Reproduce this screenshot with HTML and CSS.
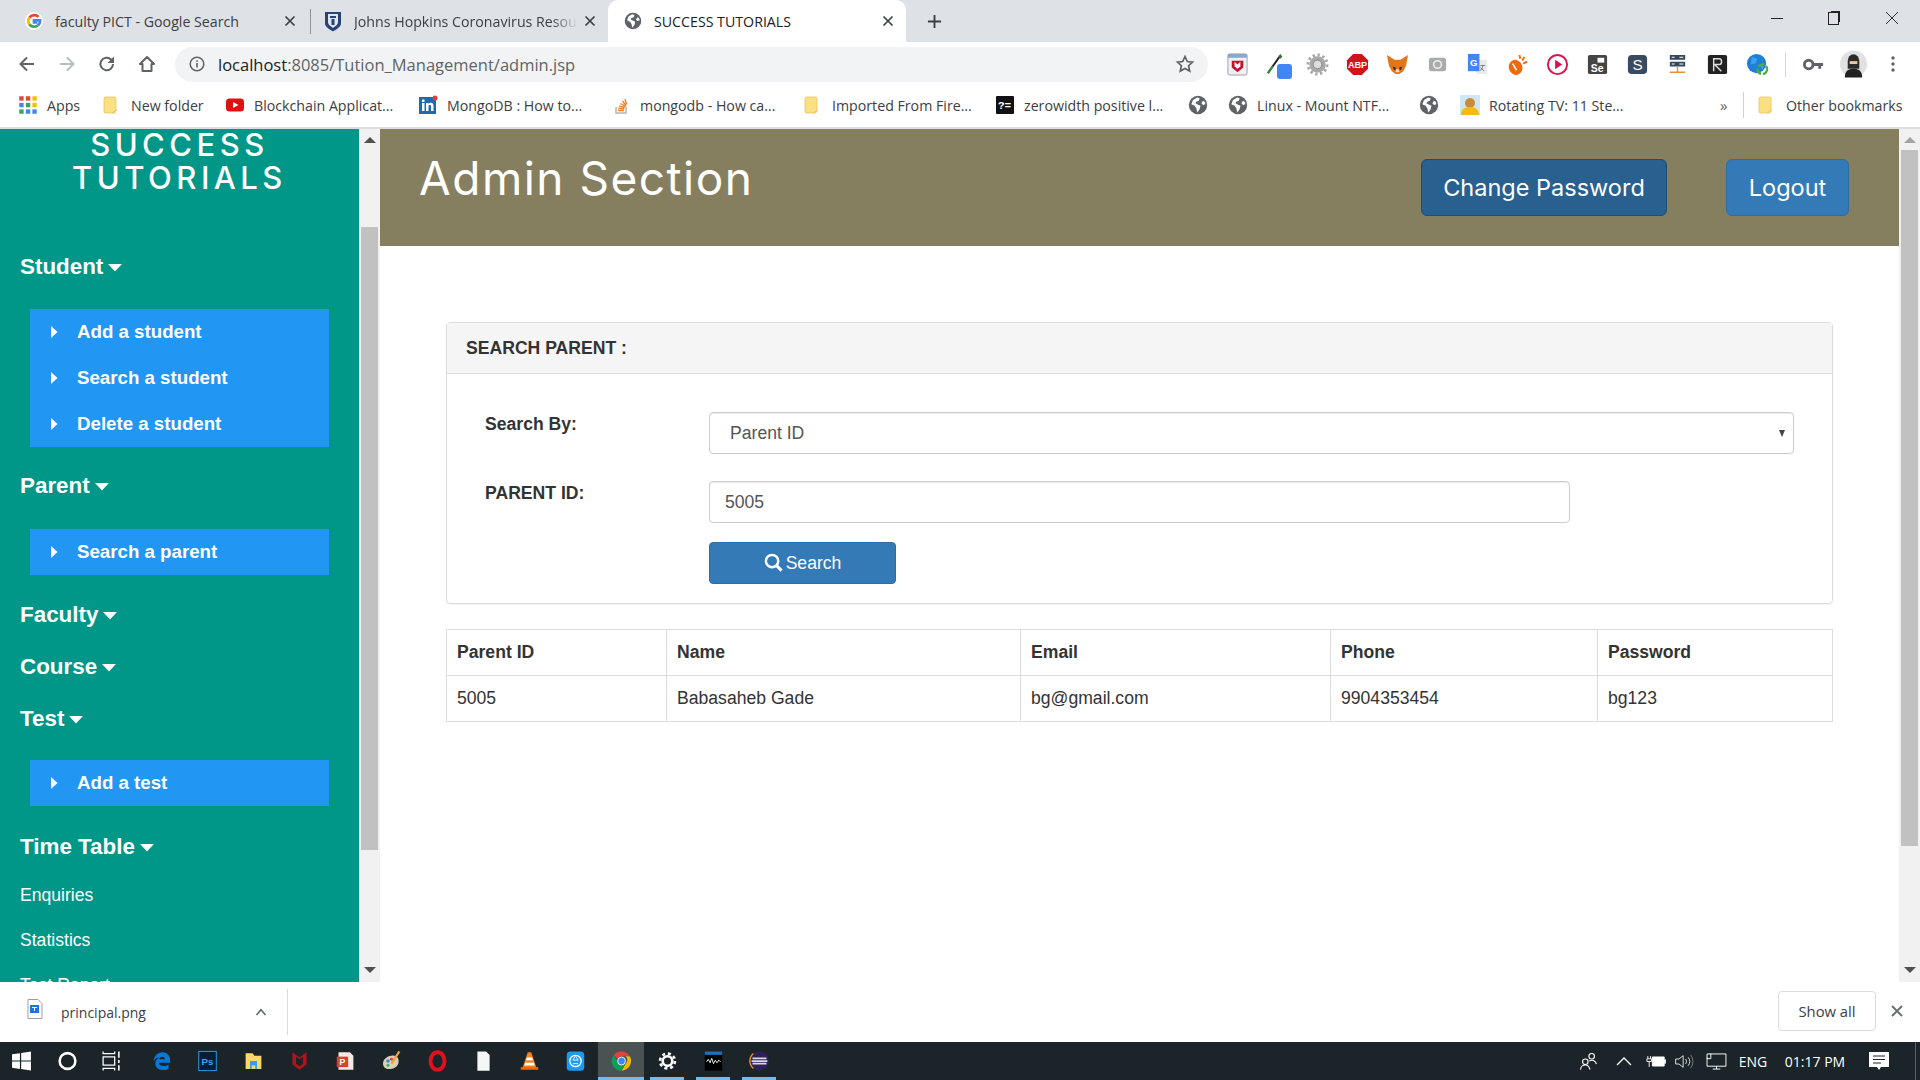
FILE: index.html
```html
<!DOCTYPE html>
<html lang="en">
<head>
<meta charset="utf-8">
<title>SUCCESS TUTORIALS</title>
<link rel="stylesheet" href="styles.css">
</head>
<body>
<svg class="sprite" xmlns="http://www.w3.org/2000/svg">
  <symbol id="globe" viewBox="0 0 24 24"><circle cx="12" cy="12" r="11" fill="#5f6368"/><path d="M11 3 6 6 4 11l4 2 2 3 1 5 3-4 1-4-4-2-2-1 1-2 3-1 1-3zM18 7l-2 3 2 2 3-1-1-3z" fill="#fff"/></symbol>
  <symbol id="g" viewBox="0 0 24 24"><circle cx="12" cy="12" r="12" fill="#fff"/><path d="M18 6.500A8 8 0 0 0 5.800 7.500" fill="none" stroke="#ea4335" stroke-width="3.600"/><path d="M5.800 7.500a8 8 0 0 0 0 9" fill="none" stroke="#fbbc05" stroke-width="3.600"/><path d="M5.800 16.500A8 8 0 0 0 17 18" fill="none" stroke="#34a853" stroke-width="3.600"/><path d="M17 18a8 8 0 0 0 3-7H12v3h4.500" fill="none" stroke="#4285f4" stroke-width="3.600"/></symbol>
  <symbol id="shield" viewBox="0 0 18 21"><path d="M1 1h16v11c0 4-4 6-8 8.500C5 18 1 16 1 12z" fill="#2a4377"/><path d="M4 3h10v8c0 3-3 4-5 6-2-2-5-3-5-6z" fill="#dfe6f2"/><path d="M6 5h6v2H6zm1.500 3h3v6h-3z" fill="#2a4377"/></symbol>
  <symbol id="x" viewBox="0 0 12 12"><path d="M1.500 1.500l9 9m0-9l-9 9" stroke="#3c4043" stroke-width="1.700" fill="none"/></symbol>
  <symbol id="plus" viewBox="0 0 16 16"><path d="M8 1v14M1 8h14" stroke="#3c4043" stroke-width="2" fill="none"/></symbol>
  <symbol id="back" viewBox="0 0 20 20"><path d="M17 10H4M10 3.500 3.500 10l6.500 6.500" stroke="#5f6368" stroke-width="2" fill="none"/></symbol>
  <symbol id="fwd" viewBox="0 0 20 20"><path d="M3 10h13M10 3.500l6.500 6.500-6.500 6.500" stroke="#b9bcc1" stroke-width="2" fill="none"/></symbol>
  <symbol id="reload" viewBox="0 0 20 20"><path d="M16 10a6.300 6.300 0 1 1-1.900-4.500L16 7.500" stroke="#5f6368" stroke-width="2" fill="none"/><path d="M17 2.500V9h-6.500z" fill="#5f6368"/></symbol>
  <symbol id="home" viewBox="0 0 20 20"><path d="M10 3 3 10h2.500v7h9v-7H17z" stroke="#5f6368" stroke-width="2" fill="none" stroke-linejoin="round"/></symbol>
  <symbol id="info" viewBox="0 0 16 16"><circle cx="8" cy="8" r="6.800" fill="none" stroke="#5f6368" stroke-width="1.500"/><path d="M7.200 7h1.600v4.500H7.200zm0-2.800h1.600v1.600H7.200z" fill="#5f6368"/></symbol>
  <symbol id="star" viewBox="0 0 20 20"><path d="m10 2.500 2.300 5 5.200.6-3.900 3.600 1.100 5.400L10 14.400l-4.700 2.700 1.100-5.400L2.500 8.100l5.200-.6z" fill="none" stroke="#5f6368" stroke-width="1.700"/></symbol>
  <symbol id="apps" viewBox="0 0 16 16"><path d="M1 1h3.500v3.500H1z" fill="#ea4335"/><path d="M6.300 1h3.500v3.500H6.300z" fill="#ea4335"/><path d="M11.500 1H15v3.500h-3.500z" fill="#fbbc05"/><path d="M1 6.300h3.500v3.500H1z" fill="#4285f4"/><path d="M6.300 6.300h3.500v3.500H6.300z" fill="#34a853"/><path d="M11.500 6.300H15v3.500h-3.500z" fill="#fbbc05"/><path d="M1 11.500h3.500V15H1z" fill="#34a853"/><path d="M6.300 11.500h3.500V15H6.300z" fill="#4285f4"/><path d="M11.500 11.500H15V15h-3.500z" fill="#4285f4"/></symbol>
  <symbol id="folder" viewBox="0 0 20 20"><path d="M3 2h10l1 1v12l-1 3H3l-1-1V3z" fill="#fbe083" stroke="#e9c460" stroke-width=".8"/><path d="M10 18l5-3" stroke="#e9c460"/></symbol>
  <symbol id="yt" viewBox="0 0 20 20"><rect x="1" y="3.500" width="18" height="13" rx="3.500" fill="#e01010"/><path d="m8 7 5.500 3L8 13z" fill="#fff"/></symbol>
  <symbol id="li" viewBox="0 0 20 20"><rect x="1" y="2" width="17" height="17" fill="#1c6cad"/><path d="M4 8h2.500v8H4zm0-3.500h2.500V7H4zM8 8h2.500v1.200c1.700-2.300 5-1.500 5 1.500V16H13v-4.600c0-1.800-2.500-1.700-2.500 0V16H8z" fill="#fff"/><circle cx="17" cy="3" r="2.500" fill="#e23b3b"/></symbol>
  <symbol id="so" viewBox="0 0 20 20"><path d="M5 12v6h10v-6" fill="none" stroke="#b6b4ad" stroke-width="1.500"/><path d="M7 15.500h6M7.200 13.200l6 .6M8 10.800l5.800 1.700M9.500 8.500l5 3M11.500 6l3.500 4.600M14 4l1.600 5.500" stroke="#f48024" stroke-width="1.400" fill="none"/></symbol>
  <symbol id="term" viewBox="0 0 20 20"><rect x="1" y="1" width="18" height="18" rx="1" fill="#111"/><text x="3" y="14" font-family="Liberation Mono" font-size="11" font-weight="700" fill="#fff">?=</text></symbol>
  <symbol id="rot" viewBox="0 0 20 20"><rect width="20" height="20" fill="#cfe7f3"/><circle cx="10" cy="8" r="5" fill="#c98a3d"/><path d="M1 20c0-6 4-8 9-8s9 2 9 8z" fill="#f5b90f"/></symbol>
  <symbol id="mcafee" viewBox="0 0 24 24"><rect x="2" y="1" width="20" height="22" rx="2" fill="#eef0f3" stroke="#9aa0a6"/><path d="M2 1h20v4H2z" fill="#8aa9c9"/><path d="M6 8h12v7l-6 5-6-5z" fill="#c8102e"/><path d="M9 9v5l3 2.500 3-2.500V9l-3 3z" fill="#fff"/></symbol>
  <symbol id="dropper" viewBox="0 0 24 24"><path d="M2 21 14 4" stroke="#222" stroke-width="2"/><path d="m13 3 2-2 2 3-2 2z" fill="#2f6d34"/><path d="m2 21 5-7" stroke="#2f8f3e" stroke-width="2"/></symbol>
  <symbol id="gear" viewBox="0 0 24 24"><circle cx="12" cy="12" r="8.500" fill="#a8a8a8"/><circle cx="12" cy="12" r="10" fill="none" stroke="#a8a8a8" stroke-width="3" stroke-dasharray="2.500 2.700"/><circle cx="12" cy="12" r="4.500" fill="#dcdcdc" stroke="#888"/></symbol>
  <symbol id="abp" viewBox="0 0 24 24"><path d="M7.500 1h9L23 7.500v9L16.500 23h-9L1 16.500v-9z" fill="#d4121a"/><text x="12" y="15.500" text-anchor="middle" font-family="Liberation Sans" font-size="9.500" font-weight="700" fill="#fff">ABP</text></symbol>
  <symbol id="fox" viewBox="0 0 24 24"><path d="M1 2l8 5h6l8-5-2 11-3 6-4 3h-4l-4-3-3-6z" fill="#e2761b"/><path d="M7 14l3 1 .5 4L8 17zM17 14l-3 1-.5 4 2.500-2z" fill="#3a2a1c"/><path d="M10 17h4v3h-4z" fill="#f0d9c0"/></symbol>
  <symbol id="grey" viewBox="0 0 24 24"><rect x="3" y="5" width="18" height="14" rx="3" fill="#a9abad"/><circle cx="12" cy="12" r="4" fill="none" stroke="#eee" stroke-width="1.600"/></symbol>
  <symbol id="gt" viewBox="0 0 24 24"><path d="M11 7h11v15H11z" fill="#e9eaec"/><path d="M2 1h12v18H2z" fill="#4285f4"/><text x="8" y="14" text-anchor="middle" font-family="Liberation Sans" font-size="10" font-weight="700" fill="#fff">G</text><path d="M15 13h5m-2.500 0c0 3-1.500 4.500-3 5.500m.5-3.500c1 1.500 2.500 2.500 4 3.500" stroke="#777" fill="none"/></symbol>
  <symbol id="orange" viewBox="0 0 24 24"><ellipse cx="10" cy="15" rx="7" ry="8" fill="#ee6a0b" transform="rotate(-20 10 15)"/><path d="M7 11l4 7" stroke="#fff" stroke-width="1.600"/><path d="M14 2l1 4M19 4l-2 4M22 9l-4 2" stroke="#ee6a0b" stroke-width="2"/></symbol>
  <symbol id="play" viewBox="0 0 24 24"><circle cx="12" cy="12" r="10" fill="none" stroke="#d9134f" stroke-width="2"/><path d="m9.500 7 7.500 5-7.500 5z" fill="#d9134f"/></symbol>
  <symbol id="se" viewBox="0 0 24 24"><rect x="2" y="2" width="20" height="20" rx="2" fill="#444"/><rect x="12" y="5" width="7" height="5" fill="#fff"/><text x="5" y="20" font-family="Liberation Sans" font-size="11" font-weight="700" fill="#fff">Se</text></symbol>
  <symbol id="s" viewBox="0 0 24 24"><rect x="2" y="2" width="20" height="20" rx="4" fill="#3b4a63"/><text x="12" y="18" text-anchor="middle" font-family="Liberation Sans" font-size="16" fill="#fff">S</text></symbol>
  <symbol id="servers" viewBox="0 0 24 24"><path d="M4 2h16v5H4zM4 9h16v5H4z" fill="#34495e"/><path d="M6 4h3v1H6zM6 11h3v1H6zM14 4h4v1h-4zM14 11h4v1h-4z" fill="#fff"/><path d="M12 14v6M4 20h16" stroke="#e58f45" stroke-width="1.500"/></symbol>
  <symbol id="r" viewBox="0 0 24 24"><rect x="2" y="2" width="20" height="20" rx="2" fill="#222"/><path d="M8 19V6h6c3 0 3 6 0 6h-5l7 7" fill="none" stroke="#ddd" stroke-width="1.500"/></symbol>
  <symbol id="earth" viewBox="0 0 24 24"><circle cx="11" cy="11" r="10" fill="#1e7fd6"/><path d="M6 4l6 2-2 5-5 1zM14 12l5-1-2 7z" fill="#3aa0ef"/><circle cx="17" cy="17" r="5" fill="none" stroke="#4dae3d" stroke-width="2.500" stroke-dasharray="7 2"/></symbol>
  <symbol id="key" viewBox="0 0 24 24"><circle cx="7" cy="12" r="4.500" fill="none" stroke="#5f6368" stroke-width="3"/><path d="M11 10.500h11v3h-2v3h-3v-3h-6z" fill="#5f6368"/></symbol>
  <symbol id="ninja" viewBox="0 0 28 28"><circle cx="14" cy="14" r="14" fill="#e1e1e1"/><path d="M8 11a6 7 0 0 1 12 0v8H8z" fill="#2b2b2b"/><path d="M10 11h8v3h-8z" fill="#e8c6a6"/><path d="M5 28c0-7 4-9 9-9s9 2 9 9z" fill="#222"/></symbol>
  <symbol id="dots" viewBox="0 0 4 16"><circle cx="2" cy="2" r="1.700" fill="#5f6368"/><circle cx="2" cy="8" r="1.700" fill="#5f6368"/><circle cx="2" cy="14" r="1.700" fill="#5f6368"/></symbol>
  <symbol id="caret-d" viewBox="0 0 14 9"><path d="M0 1h14L7 8.500z" fill="currentColor"/></symbol>
  <symbol id="caret-r" viewBox="0 0 8 12"><path d="M1 0l6.500 6L1 12z" fill="currentColor"/></symbol>
  <symbol id="search" viewBox="0 0 20 20"><circle cx="8.500" cy="8.500" r="6.500" fill="none" stroke="#fff" stroke-width="2.600"/><path d="m13 13 5.500 5.500" stroke="#fff" stroke-width="3.200"/></symbol>
  <symbol id="file" viewBox="0 0 16 20"><path d="M1 .5h10l4 4v15H1z" fill="#fff" stroke="#9a9ea3"/><rect x="3" y="6" width="9" height="8" fill="#1a73e8"/><path d="M5 8h5v1H5zM7 9h1v3H7z" fill="#fff"/></symbol>
  <symbol id="win" viewBox="0 0 20 20"><path d="M1 3.500 8.500 2.500v7H1zM9.700 2.300 19 1v8.500H9.700zM1 10.500h7.500v7L1 16.500zM9.700 10.500H19V19l-9.300-1.300z" fill="#fff"/></symbol>
  <symbol id="cortana" viewBox="0 0 20 20"><circle cx="10" cy="10" r="7.500" fill="none" stroke="#fff" stroke-width="2.400"/></symbol>
  <symbol id="taskview" viewBox="0 0 20 20"><path d="M2 1v2h11V1M2 19v-2h11v2M2 6h11v8H2z" fill="none" stroke="#fff" stroke-width="1.200"/><path d="M17 1v6M17 9v3M17 14v5" stroke="#fff" stroke-width="1.500"/></symbol>
  <symbol id="edge" viewBox="0 0 24 24"><path d="M3 13C3 6 8 2 13 2c6 0 9 4 9 10v2H9c0 4 7 5 11 2v5c-6 3-15 1-15-6 0-3 1-5 4-7-3 0-5 2-6 5zM9 10h7c0-4-6-4-7 0z" fill="#0a78d4"/></symbol>
  <symbol id="ps" viewBox="0 0 24 24"><rect x="2" y="1" width="20" height="22" fill="#001e36" stroke="#31a8ff"/><text x="12" y="16" text-anchor="middle" font-family="Liberation Sans" font-size="11" font-weight="700" fill="#31a8ff">Ps</text></symbol>
  <symbol id="explorer" viewBox="0 0 24 24"><path d="M3 3h8l2 3h8v15H3z" fill="#ffd669"/><path d="M8 12h8v9H8z" fill="#2f9fe8"/><path d="M10 17h4v4h-4z" fill="#ffd669"/></symbol>
  <symbol id="mc-t" viewBox="0 0 24 24"><path d="M4 2l8 6 8-6v14l-8 6-8-6z" fill="#b5121b"/><path d="M8 7v8l4 3 4-3V7l-4 3z" fill="#1b2428"/></symbol>
  <symbol id="ppt" viewBox="0 0 24 24"><path d="M4 2h13l4 4v16H4z" fill="#f6e9e4"/><path d="M2 7h13v12H2z" fill="#d24726"/><text x="8.500" y="16.500" text-anchor="middle" font-family="Liberation Sans" font-size="10" font-weight="700" fill="#fff">P</text></symbol>
  <symbol id="paint" viewBox="0 0 24 24"><path d="M12 6c6-1 9 3 8 8-1 6-8 8-13 7C2 20 1 14 4 10c2-2 5-4 8-4z" fill="#d8cfb8"/><circle cx="8" cy="12" r="2" fill="#2f8fd6"/><circle cx="12" cy="10" r="1.700" fill="#e23b3b"/><circle cx="8" cy="17" r="1.700" fill="#3fae49"/><path d="M21 1l-9 14" stroke="#e8a33a" stroke-width="2.500"/></symbol>
  <symbol id="opera" viewBox="0 0 24 24"><ellipse cx="12" cy="12" rx="8" ry="10" fill="none" stroke="#e0111f" stroke-width="4.500"/></symbol>
  <symbol id="note" viewBox="0 0 24 24"><path d="M5 1h10l4 4v18H5z" fill="#f4f6f7"/></symbol>
  <symbol id="vlc" viewBox="0 0 24 24"><path d="M10 2h4l6 18H4z" fill="#f58220"/><path d="M9 8h6l1 3H8zM7 14h10l1 3H6z" fill="#fff"/><path d="M2 19h20v3H2z" fill="#e86a10"/></symbol>
  <symbol id="bluebox" viewBox="0 0 24 24"><rect x="2" y="1" width="20" height="22" rx="4" fill="#1c9bf0"/><circle cx="12" cy="12" r="6.500" fill="none" stroke="#fff" stroke-width="1.500"/><path d="m12 6 3 5H9zM9 15h6" stroke="#fff" fill="none"/></symbol>
  <symbol id="chrome" viewBox="0 0 24 24"><path d="M12 1a11 11 0 0 1 9.500 5.500H12a5.500 5.500 0 0 0-5 3L3.300 5A11 11 0 0 1 12 1z" fill="#db4437"/><path d="M21.500 6.500A11 11 0 0 1 12 23l4.800-8.200a5.500 5.500 0 0 0-.2-8.300z" fill="#f4b400"/><path d="M12 23A11 11 0 0 1 3.300 5L7.800 14a5.500 5.500 0 0 0 9 .8z" fill="#0f9d58"/><circle cx="12" cy="12" r="4.500" fill="#4285f4" stroke="#fff"/></symbol>
  <symbol id="settings" viewBox="0 0 24 24"><circle cx="12" cy="12" r="5.500" fill="none" stroke="#fff" stroke-width="3"/><circle cx="12" cy="12" r="8.500" fill="none" stroke="#fff" stroke-width="3" stroke-dasharray="3.500 3.200"/></symbol>
  <symbol id="mysql" viewBox="0 0 24 24"><rect x="2" y="1" width="20" height="22" fill="#000"/><path d="M2 1h20v4H2z" fill="#1f6fb5"/><path d="M4 13l2-3 2 4 2-5 2 6 2-4 2 3 2-3 2 2" stroke="#fff" fill="none"/></symbol>
  <symbol id="eclipse" viewBox="0 0 24 24"><circle cx="12" cy="12" r="11" fill="#2c2255"/><path d="M4 8h16v2H4zM3 11h18v2H3zM4 14h16v2H4z" fill="#d9d6e8"/><path d="M5 3.500a11 11 0 0 0 0 17" fill="none" stroke="#f7941e" stroke-width="1.500"/></symbol>
  <symbol id="people" viewBox="0 0 24 24"><circle cx="8" cy="13" r="3.500" fill="none" stroke="#fff" stroke-width="1.400"/><path d="M2 23c0-4 3-6 6-6s5 2 6 6" fill="none" stroke="#fff" stroke-width="1.400"/><circle cx="16" cy="6" r="3.500" fill="none" stroke="#fff" stroke-width="1.400"/><path d="M13 12c3-2 8-1 9 4" fill="none" stroke="#fff" stroke-width="1.400"/></symbol>
  <symbol id="chev" viewBox="0 0 16 10"><path d="M1 9l7-7 7 7" fill="none" stroke="#fff" stroke-width="1.300"/></symbol>
  <symbol id="battery" viewBox="0 0 22 14"><path d="M7 2h13v10H7z" fill="#fff" stroke="#fff"/><path d="M20.500 5h1v4h-1zM2 1v3M5 1v3M1 4h5v3H1zM3.500 7v6" stroke="#fff" fill="none"/></symbol>
  <symbol id="speaker" viewBox="0 0 22 18"><path d="M1 6h4l5-4v14l-5-4H1z" fill="none" stroke="#fff"/><path d="M13 6a5 5 0 0 1 0 6M16 4a8 8 0 0 1 0 10" fill="none" stroke="#fff"/><path d="M19 1a13 13 0 0 1 0 16" fill="none" stroke="#888"/></symbol>
  <symbol id="net" viewBox="0 0 22 18"><path d="M4 1h17v13H1V5" fill="none" stroke="#fff"/><path d="M1 1h4v5H1zM11 14v3M7 17h8" fill="none" stroke="#fff"/></symbol>
  <symbol id="notif" viewBox="0 0 20 18"><path d="M0 0h20v15h-8l-2 3-2-3H0z" fill="#fff"/><path d="M4 4h12M4 7.500h12M4 11h8" stroke="#1b2428"/></symbol>
</svg>

<div class="tabstrip">
  <div class="tab">
    <svg class="fav"><use href="#g"/></svg>
    <span class="tab-title">faculty PICT - Google Search</span>
    <svg class="tab-x"><use href="#x"/></svg>
  </div>
  <div class="tab tab-sep">
    <svg class="fav fav-tall"><use href="#shield"/></svg>
    <span class="tab-title tab-fade">Johns Hopkins Coronavirus Resource Center</span>
    <svg class="tab-x"><use href="#x"/></svg>
  </div>
  <div class="tab tab-active">
    <svg class="fav"><use href="#globe"/></svg>
    <span class="tab-title">SUCCESS TUTORIALS</span>
    <svg class="tab-x"><use href="#x"/></svg>
  </div>
  <svg class="new-tab"><use href="#plus"/></svg>
  <div class="win-ctl">
    <span class="win-min"></span>
    <span class="win-max"></span>
    <svg class="win-x" viewBox="0 0 14 14"><path d="M1 1l12 12M13 1 1 13" stroke="#333" fill="none"/></svg>
  </div>
</div>

<div class="toolbar">
  <span class="cell"><svg class="nav-ic"><use href="#back"/></svg></span>
  <span class="cell"><svg class="nav-ic"><use href="#fwd"/></svg></span>
  <span class="cell"><svg class="nav-ic"><use href="#reload"/></svg></span>
  <span class="cell"><svg class="nav-ic"><use href="#home"/></svg></span>
  <div class="omnibox">
    <svg class="omni-info"><use href="#info"/></svg>
    <span class="url"><span class="url-host">localhost</span>:8085/Tution_Management/admin.jsp</span>
    <svg class="omni-star"><use href="#star"/></svg>
  </div>
  <div class="exts">
    <span class="cell"><svg class="ext"><use href="#mcafee"/></svg></span>
    <span class="cell cell-drop"><svg class="ext"><use href="#dropper"/></svg><span class="drop-badge"></span></span>
    <span class="cell"><svg class="ext"><use href="#gear"/></svg></span>
    <span class="cell"><svg class="ext"><use href="#abp"/></svg></span>
    <span class="cell"><svg class="ext"><use href="#fox"/></svg></span>
    <span class="cell"><svg class="ext"><use href="#grey"/></svg></span>
    <span class="cell"><svg class="ext"><use href="#gt"/></svg></span>
    <span class="cell"><svg class="ext"><use href="#orange"/></svg></span>
    <span class="cell"><svg class="ext"><use href="#play"/></svg></span>
    <span class="cell"><svg class="ext"><use href="#se"/></svg></span>
    <span class="cell"><svg class="ext"><use href="#s"/></svg></span>
    <span class="cell"><svg class="ext"><use href="#servers"/></svg></span>
    <span class="cell"><svg class="ext"><use href="#r"/></svg></span>
    <span class="cell"><svg class="ext"><use href="#earth"/></svg></span>
    <span class="tool-sep"></span>
    <span class="cell"><svg class="ext"><use href="#key"/></svg></span>
    <span class="cell"><svg class="avatar"><use href="#ninja"/></svg></span>
    <span class="cell"><svg class="dots"><use href="#dots"/></svg></span>
  </div>
</div>

<div class="bookmarks">
  <span class="bm"><svg class="bm-ic"><use href="#apps"/></svg>Apps</span>
  <span class="bm"><svg class="bm-ic"><use href="#folder"/></svg>New folder</span>
  <span class="bm"><svg class="bm-ic"><use href="#yt"/></svg>Blockchain Applicat...</span>
  <span class="bm"><svg class="bm-ic"><use href="#li"/></svg>MongoDB : How to...</span>
  <span class="bm"><svg class="bm-ic"><use href="#so"/></svg>mongodb - How ca...</span>
  <span class="bm"><svg class="bm-ic"><use href="#folder"/></svg>Imported From Fire...</span>
  <span class="bm"><svg class="bm-ic"><use href="#term"/></svg>zerowidth positive l...</span>
  <span class="bm"><svg class="bm-ic"><use href="#globe"/></svg></span>
  <span class="bm"><svg class="bm-ic"><use href="#globe"/></svg>Linux - Mount NTF...</span>
  <span class="bm"><svg class="bm-ic"><use href="#globe"/></svg></span>
  <span class="bm"><svg class="bm-ic"><use href="#rot"/></svg>Rotating TV: 11 Ste...</span>
  <span class="bm-more">»</span>
  <span class="bm-sep"></span>
  <span class="bm"><svg class="bm-ic"><use href="#folder"/></svg>Other bookmarks</span>
</div>

<div class="page">
  <aside class="sidebar">
    <div class="logo">SUCCESS<br>TUTORIALS</div>
    <div class="nav-head nav-first">Student <svg class="caret"><use href="#caret-d"/></svg></div>
    <ul class="sub">
      <li class="sub-item"><svg class="arrow"><use href="#caret-r"/></svg>Add a student</li>
      <li class="sub-item"><svg class="arrow"><use href="#caret-r"/></svg>Search a student</li>
      <li class="sub-item"><svg class="arrow"><use href="#caret-r"/></svg>Delete a student</li>
    </ul>
    <div class="nav-head">Parent <svg class="caret"><use href="#caret-d"/></svg></div>
    <ul class="sub sub-roomy">
      <li class="sub-item"><svg class="arrow"><use href="#caret-r"/></svg>Search a parent</li>
    </ul>
    <div class="nav-head">Faculty <svg class="caret"><use href="#caret-d"/></svg></div>
    <div class="nav-head">Course <svg class="caret"><use href="#caret-d"/></svg></div>
    <div class="nav-head">Test <svg class="caret"><use href="#caret-d"/></svg></div>
    <ul class="sub sub-tight">
      <li class="sub-item"><svg class="arrow"><use href="#caret-r"/></svg>Add a test</li>
    </ul>
    <div class="nav-head">Time Table <svg class="caret"><use href="#caret-d"/></svg></div>
    <div class="nav-link">Enquiries</div>
    <div class="nav-link">Statistics</div>
    <div class="nav-link">Test Report</div>
  </aside>
  <div class="scrollbar scrollbar-side">
    <span class="sb-up"></span>
    <span class="sb-thumb sb-thumb-side"></span>
    <span class="sb-down"></span>
  </div>
  <main class="main">
    <header class="main-head">
      <h1 class="title">Admin Section</h1>
      <div class="head-actions">
        <a class="head-btn head-btn-dark">Change Password</a>
        <a class="head-btn">Logout</a>
      </div>
    </header>
    <div class="content">
      <section class="panel">
        <div class="panel-head">SEARCH PARENT :</div>
        <div class="panel-body">
          <div class="form-row">
            <label class="form-label">Search By:</label>
            <div class="select-wrap">
              <select class="field field-select"><option>Parent ID</option></select>
            </div>
          </div>
          <div class="form-row">
            <label class="form-label">PARENT ID:</label>
            <input class="field field-input" value="5005">
          </div>
          <div class="form-row form-row-btn">
            <span></span>
            <button class="search-btn"><svg class="search-ic"><use href="#search"/></svg>Search</button>
          </div>
        </div>
      </section>
      <table class="results">
        <thead>
          <tr><th class="c1">Parent ID</th><th class="c2">Name</th><th class="c3">Email</th><th class="c4">Phone</th><th>Password</th></tr>
        </thead>
        <tbody>
          <tr><td>5005</td><td>Babasaheb Gade</td><td>bg@gmail.com</td><td>9904353454</td><td>bg123</td></tr>
        </tbody>
      </table>
    </div>
  </main>
  <div class="scrollbar scrollbar-main">
    <span class="sb-up"></span>
    <span class="sb-thumb sb-thumb-main"></span>
    <span class="sb-down"></span>
  </div>
</div>

<div class="downloads">
  <div class="dl-item">
    <svg class="dl-file"><use href="#file"/></svg>
    <span class="dl-name">principal.png</span>
    <svg class="dl-chev" viewBox="0 0 16 10"><path d="M2 9l6-7 6 7" fill="none" stroke="#5f6368" stroke-width="2"/></svg>
  </div>
  <button class="show-all">Show all</button>
  <svg class="dl-close" viewBox="0 0 12 12"><path d="M1 1l10 10M11 1 1 11" stroke="#6b6f73" stroke-width="2" fill="none"/></svg>
</div>

<div class="taskbar">
  <span class="tb"><svg class="tb-ic tb-win"><use href="#win"/></svg></span>
  <span class="tb"><svg class="tb-ic tb-cortana"><use href="#cortana"/></svg></span>
  <span class="tb"><svg class="tb-ic tb-view"><use href="#taskview"/></svg></span>
  <span class="tb"><svg class="tb-ic"><use href="#edge"/></svg></span>
  <span class="tb"><svg class="tb-ic"><use href="#ps"/></svg></span>
  <span class="tb"><svg class="tb-ic"><use href="#explorer"/></svg></span>
  <span class="tb"><svg class="tb-ic"><use href="#mc-t"/></svg></span>
  <span class="tb"><svg class="tb-ic"><use href="#ppt"/></svg></span>
  <span class="tb"><svg class="tb-ic"><use href="#paint"/></svg></span>
  <span class="tb"><svg class="tb-ic"><use href="#opera"/></svg></span>
  <span class="tb"><svg class="tb-ic"><use href="#note"/></svg></span>
  <span class="tb"><svg class="tb-ic"><use href="#vlc"/></svg></span>
  <span class="tb"><svg class="tb-ic"><use href="#bluebox"/></svg></span>
  <span class="tb tb-open tb-active"><svg class="tb-ic"><use href="#chrome"/></svg></span>
  <span class="tb tb-open"><svg class="tb-ic"><use href="#settings"/></svg></span>
  <span class="tb tb-open"><svg class="tb-ic"><use href="#mysql"/></svg></span>
  <span class="tb tb-open"><svg class="tb-ic"><use href="#eclipse"/></svg></span>
  <div class="tray">
    <span class="tr tr-36"><svg class="tr-people"><use href="#people"/></svg></span>
    <span class="tr tr-36"><svg class="tr-chev"><use href="#chev"/></svg></span>
    <span class="tr tr-28"><svg class="tr-ic"><use href="#battery"/></svg></span>
    <span class="tr tr-28"><svg class="tr-ic"><use href="#speaker"/></svg></span>
    <span class="tr tr-36"><svg class="tr-net"><use href="#net"/></svg></span>
    <span class="tr tr-38">ENG</span>
    <span class="tr tr-86">01:17 PM</span>
    <span class="tr tr-42"><svg class="tr-notif"><use href="#notif"/></svg></span>
    <span class="tr tr-20"><span class="desk-line"></span></span>
  </div>
</div>
</body>
</html>
```
FILE: styles.css
```css
* { box-sizing: border-box; }
html, body { margin: 0; padding: 0; }
body {
  width: 1920px;
  height: 1080px;
  overflow: hidden;
  display: flex;
  flex-direction: column;
  font-family: "Liberation Sans", Arial, sans-serif;
  background: #fff;
}
.sprite { display: none; }

/* tab strip */
.tabstrip {
  height: 42px;
  flex: none;
  background: #dee1e6;
  display: flex;
  padding-left: 8px;
  font-family: "Open Sans", sans-serif;
  font-size: 14.2px;
  color: #3c4043;
}
.tab {
  width: 300px;
  display: flex;
  align-items: center;
  padding: 0 12px 0 17px;
  position: relative;
}
.tab-sep { padding-left: 16px; }
.tab-sep::before {
  content: "";
  position: absolute;
  left: 2px;
  top: 9px;
  height: 25px;
  width: 1px;
  background: #8f9296;
}
.tab-active {
  width: 298px;
  padding-left: 16px;
  background: #fff;
  border-radius: 10px 10px 0 0;
  color: #202124;
}
.fav { width: 18px; height: 18px; flex: none; }
.fav-tall { height: 21px; }
.tab-title {
  margin-left: 12px;
  flex: 1;
  white-space: nowrap;
  overflow: hidden;
}
.tab-fade {
  -webkit-mask-image: linear-gradient(to right, #000 88%, transparent 100%);
  mask-image: linear-gradient(to right, #000 88%, transparent 100%);
}
.tab-x { width: 12px; height: 12px; flex: none; margin-left: 6px; }
.new-tab { width: 15px; height: 15px; margin: 14px 0 0 21px; }
.win-ctl {
  margin-left: auto;
  width: 173px;
  display: flex;
  align-items: center;
  padding-bottom: 6px;
}
.win-min { width: 12px; height: 1px; background: #222; margin-left: 24px; }
.win-max {
  width: 11px;
  height: 13px;
  border: 1.5px solid #222;
  box-shadow: 2px -2px 0 -1px #222;
  margin-left: 45px;
}
.win-x { width: 14px; height: 14px; margin-left: 46px; }

/* toolbar */
.toolbar {
  height: 44px;
  flex: none;
  background: #fff;
  display: flex;
  align-items: center;
  padding-left: 7px;
}
.cell {
  width: 40px;
  height: 30px;
  flex: none;
  display: flex;
  align-items: center;
  justify-content: center;
  position: relative;
}
.nav-ic { width: 20px; height: 20px; }
.omnibox {
  margin-left: 8px;
  width: 1033px;
  height: 35px;
  background: #f1f3f4;
  border-radius: 18px;
  display: flex;
  align-items: center;
  padding: 0 13px 0 14px;
  font-family: "Open Sans", sans-serif;
}
.omni-info { width: 16px; height: 16px; flex: none; }
.url { margin-left: 13px; font-size: 16.5px; color: #5f6368; flex: 1; white-space: nowrap; }
.url-host { color: #202124; }
.omni-star { width: 20px; height: 20px; flex: none; }
.exts { margin-left: 9px; display: flex; align-items: center; }
.ext { width: 23px; height: 23px; }
.cell-drop .drop-badge {
  position: absolute;
  left: 20px;
  top: 15px;
  width: 15px;
  height: 15px;
  background: #4285f4;
  border-radius: 3px;
}
.tool-sep { width: 1px; height: 25px; background: #d6d8da; margin: 0 7px 0 8px; flex: none; }
.avatar { width: 27px; height: 28px; }
.dots { width: 4px; height: 16px; }

/* bookmarks */
.bookmarks {
  height: 43px;
  flex: none;
  background: #fff;
  border-bottom: 2px solid #dcdedf;
  padding: 0 0 3px 18px;
  display: grid;
  grid-template-columns: 84px 123px 193px 193px 192px 192px 193px 40px 191px 41px 258px 25px 14px 1fr;
  align-items: center;
  font-family: "Open Sans", sans-serif;
  font-size: 14.2px;
  color: #3c4043;
}
.bm { display: flex; align-items: center; white-space: nowrap; }
.bm-ic { width: 20px; height: 20px; margin-right: 9px; flex: none; }
.bm-more { font-size: 15px; color: #5f6368; padding-left: 2px; }
.bm-sep { width: 1px; height: 26px; background: #cfd1d3; }

/* page */
.page { flex: none; height: 853px; display: flex; overflow: hidden; }
.sidebar {
  width: 359px;
  flex: none;
  background: #009688;
  color: #fff;
  overflow: hidden;
}
.logo {
  text-align: center;
  font-family: Inter, sans-serif;
  font-size: 31px;
  font-weight: 500;
  line-height: 33px;
  letter-spacing: 4.5px;
  margin-top: -1px;
  margin-bottom: 60px;
  height: 66px;
}
.nav-head {
  margin: 26px 0 0 20px;
  font-size: 22.4px;
  font-weight: 700;
  line-height: 26px;
  display: flex;
  align-items: center;
  gap: 5px;
}
.nav-first { margin-top: 0; }
.caret { width: 14px; height: 9px; color: #fff; }
.sub {
  list-style: none;
  margin: 29px 30px 0;
  padding: 0;
  background: #2196f3;
  width: 299px;
}
.sub-roomy { margin-top: 30px; }
.sub-tight { margin-top: 28px; }
.sub-roomy + .nav-head { margin-top: 27px; }
.sub-tight + .nav-head { margin-top: 28px; }
.sub-item {
  height: 46px;
  display: flex;
  align-items: center;
  padding-left: 20px;
  font-size: 18.7px;
  font-weight: 700;
}
.arrow { width: 8px; height: 12px; margin-right: 19px; color: #fff; }
.nav-link {
  margin: 21px 0 0 20px;
  font-size: 17.6px;
  line-height: 24px;
}
.nav-head + .nav-link { margin-top: 23px; }

.scrollbar {
  flex: none;
  background: #f1f1f1;
  display: flex;
  flex-direction: column;
  align-items: center;
  position: relative;
}
.scrollbar-side { width: 21px; }
.scrollbar-main { width: 21px; }
.sb-up, .sb-down { width: 0; height: 0; border-left: 6px solid transparent; border-right: 6px solid transparent; flex: none; }
.sb-up { border-bottom: 6px solid #505050; margin-top: 8px; }
.sb-down { border-top: 6px solid #505050; margin-bottom: 9px; }
.scrollbar-main .sb-up { border-bottom-color: #a3a3a3; }
.sb-thumb { width: 17px; background: #c1c1c1; flex: none; }
.sb-thumb-side { margin: 84px 0 auto; height: 623px; }
.sb-thumb-main { margin: 7px 0 auto; height: 696px; }

.main { flex: 1; display: flex; flex-direction: column; min-width: 0; }
.main-head {
  height: 117px;
  flex: none;
  background: #857f5f;
  display: flex;
  align-items: flex-start;
  justify-content: space-between;
  padding: 0 50px 0 39px;
}
.title {
  margin: 22px 0 0;
  font-family: Inter, sans-serif;
  font-size: 46px;
  line-height: 54px;
  font-weight: 400;
  color: #fff;
  letter-spacing: 1.5px;
}
.head-actions { display: flex; gap: 59px; margin-top: 30px; }
.head-btn {
  height: 57px;
  display: flex;
  align-items: center;
  justify-content: center;
  padding: 0 20px;
  min-width: 123px;
  background: #337ab7;
  border: 1px solid #2e6da4;
  border-radius: 6px;
  color: #fff;
  font-family: Inter, sans-serif;
  font-size: 23.500px;
}
.head-btn-dark { background: #286090; border-color: #204d74; width: 246px; }

.content { padding: 76px 66px 0 66px; }
.panel {
  border: 1px solid #ddd;
  border-radius: 4px;
  height: 282px;
  box-shadow: 0 1px 1px rgba(0,0,0,.05);
}
.panel-head {
  height: 51px;
  background: #f5f5f5;
  border-bottom: 1px solid #ddd;
  padding-left: 19px;
  display: flex;
  align-items: center;
  font-size: 17.6px;
  font-weight: 700;
  color: #333;
}
.panel-body { padding: 38px 38px 0 38px; }
.form-row { display: grid; grid-template-columns: 224px 1fr; margin-bottom: 27px; }
.form-row-btn { margin-top: -8px; margin-bottom: 0; }
.form-label { font-size: 17.6px; font-weight: 700; color: #333; line-height: 25px; }
.field {
  height: 42px;
  border: 1px solid #ccc;
  border-radius: 4px;
  background: #fff;
  font-family: "Liberation Sans", Arial, sans-serif;
  font-size: 17.6px;
  color: #555;
  box-shadow: inset 0 1px 1px rgba(0,0,0,.075);
  outline: none;
}
.select-wrap { position: relative; }
.select-wrap::after {
  content: "";
  position: absolute;
  right: 9px;
  top: 18px;
  border-left: 3.5px solid transparent;
  border-right: 3.5px solid transparent;
  border-top: 7px solid #444;
}
.field-select { width: 100%; padding-left: 20px; appearance: none; -webkit-appearance: none; display: block; }
.field-input { width: 861px; padding: 0 15px; }
.search-btn {
  width: 187px;
  height: 42px;
  background: #337ab7;
  border: 1px solid #2e6da4;
  border-radius: 4px;
  color: #fff;
  font-family: "Liberation Sans", Arial, sans-serif;
  font-size: 17.6px;
  display: flex;
  align-items: center;
  justify-content: center;
  padding: 0;
}
.search-ic { width: 19px; height: 19px; margin-right: 3px; margin-top: -2px; }

.results {
  width: 100%;
  margin-top: 25px;
  border-collapse: collapse;
  table-layout: fixed;
  font-size: 17.6px;
  color: #333;
}
.results th, .results td {
  border: 1px solid #ddd;
  height: 46px;
  padding: 0 10px;
  text-align: left;
}
.results th { font-weight: 700; }
.c1 { width: 220px; }
.c2 { width: 354px; }
.c3 { width: 310px; }
.c4 { width: 267px; }

/* download bar */
.downloads {
  height: 60px;
  flex: none;
  background: #fff;
  display: flex;
  align-items: center;
  padding-right: 17px;
  font-family: "Open Sans", sans-serif;
}
.dl-item {
  width: 288px;
  height: 46px;
  border-right: 1px solid #d8dadc;
  display: flex;
  align-items: center;
  padding: 0 20px 0 27px;
}
.dl-file { width: 16px; height: 20px; margin-top: -6px; }
.dl-name { margin-left: 18px; font-size: 14px; color: #3c4043; flex: 1; }
.dl-chev { width: 12px; height: 8px; margin-top: 0; }
.show-all {
  margin-left: auto;
  width: 98px;
  height: 40px;
  background: #fff;
  border: 1px solid #dadce0;
  border-radius: 4px;
  font-family: "Open Sans", sans-serif;
  font-size: 14.8px;
  color: #3c4043;
  margin-top: -3px;
}
.dl-close { width: 12px; height: 12px; margin: -2px 0 0 15px; }

/* taskbar */
.taskbar {
  height: 38px;
  flex: none;
  background: #1b2428;
  display: flex;
  color: #fff;
  font-family: "Open Sans", sans-serif;
  font-size: 14px;
}
.tb {
  width: 46px;
  height: 38px;
  flex: none;
  display: flex;
  align-items: center;
  justify-content: center;
  position: relative;
}
.tb-ic { width: 21px; height: 22px; }
.tb-win { margin-right: 4px; }
.tb-cortana { margin-right: 4px; }
.tb-view { margin-right: 7px; }
.tb-open::after {
  content: "";
  position: absolute;
  left: 6px;
  right: 6px;
  bottom: 0;
  height: 3px;
  background: #76b9ed;
}
.tb-active { background: #4a5254; }
.tb-active::after { left: 0; right: 0; }
.tray { margin-left: auto; display: flex; width: 350px; }
.tr { display: flex; align-items: center; justify-content: center; flex: none; height: 38px; }
.tr-20 { width: 20px; justify-content: flex-end; }
.tr-28 { width: 28px; }
.tr-36 { width: 36px; }
.tr-38 { width: 38px; }
.tr-42 { width: 42px; }
.tr-86 { width: 86px; }
.tr-people { width: 19px; height: 20px; }
.tr-chev { width: 16px; height: 10px; }
.tr-ic { width: 20px; height: 15px; }
.tr-net { width: 21px; height: 17px; }
.tr-notif { width: 20px; height: 18px; }
.desk-line { width: 1px; height: 38px; background: #59616a; margin-right: 4px; }
```
